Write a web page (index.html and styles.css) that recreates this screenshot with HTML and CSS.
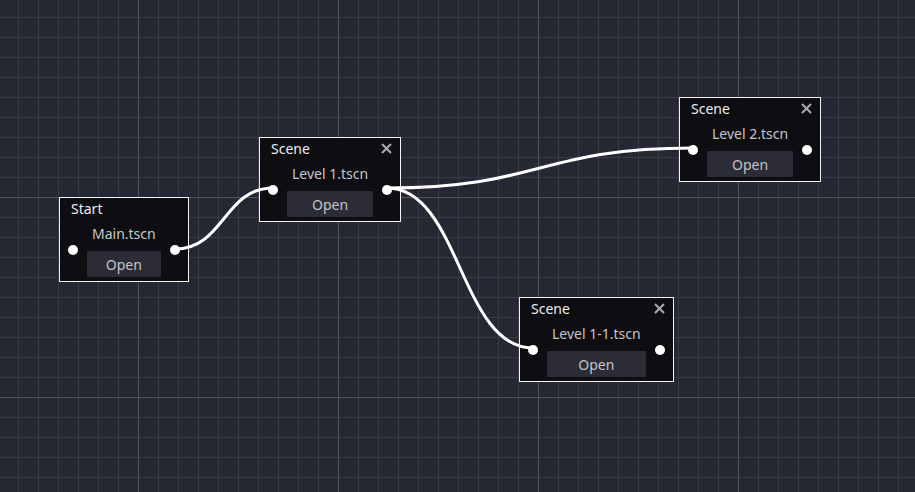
FILE: index.html
```html
<!DOCTYPE html>
<html lang="en">
<head>
  <meta charset="UTF-8" />
  <title>Scene graph</title>
  <link rel="stylesheet" href="styles.css">
</head>
<body>

<div class="graph">

  <div class="node node-main">
    <div class="node-title"><span>Start</span></div>
    <div class="node-body">
      <span class="port"></span>
      <div class="slot">
        <div class="file">Main.tscn</div>
        <button class="open">Open</button>
      </div>
      <span class="port"></span>
    </div>
  </div>

  <div class="node node-level1">
    <div class="node-title">
      <span>Scene</span>
      <svg class="close" width="11" height="11" viewBox="0 0 11 11"><path d="M1 1L10 10M10 1L1 10" /></svg>
    </div>
    <div class="node-body">
      <span class="port"></span>
      <div class="slot">
        <div class="file">Level 1.tscn</div>
        <button class="open">Open</button>
      </div>
      <span class="port"></span>
    </div>
  </div>

  <div class="node node-level2">
    <div class="node-title">
      <span>Scene</span>
      <svg class="close" width="11" height="11" viewBox="0 0 11 11"><path d="M1 1L10 10M10 1L1 10" /></svg>
    </div>
    <div class="node-body">
      <span class="port"></span>
      <div class="slot">
        <div class="file">Level 2.tscn</div>
        <button class="open">Open</button>
      </div>
      <span class="port"></span>
    </div>
  </div>

  <div class="node node-level11">
    <div class="node-title">
      <span>Scene</span>
      <svg class="close" width="11" height="11" viewBox="0 0 11 11"><path d="M1 1L10 10M10 1L1 10" /></svg>
    </div>
    <div class="node-body">
      <span class="port"></span>
      <div class="slot">
        <div class="file">Level 1-1.tscn</div>
        <button class="open">Open</button>
      </div>
      <span class="port"></span>
    </div>
  </div>

  <!-- connections sit above the node panels -->
  <svg class="wires" width="915" height="492">
    <path d="M175 249 C224 249 224 188 273 188" />
    <path d="M387 188 C540 188 540 148 693 148" />
    <path d="M387 188 C460 188 460 348 533 348" />
  </svg>

</div>

</body>
</html>
```

FILE: styles.css
```css
body {
  margin: 0;
  overflow: hidden;
  font-family: "Noto Sans", sans-serif;
  font-size: 14px;
}
.graph {
  position: relative;
  width: 915px;
  height: 492px;
  background-color: #252733;
  background-image:
    linear-gradient(to right, #51535f 1px, transparent 1px),
    linear-gradient(to bottom, #51535f 1px, transparent 1px),
    linear-gradient(to right, #393b48 1px, transparent 1px),
    linear-gradient(to bottom, #393b48 1px, transparent 1px);
  background-size: 200px 200px, 200px 200px, 20px 20px, 20px 20px;
  background-position: 138px 197px, 138px 197px, 18px 17px, 18px 17px;
}
.node {
  position: absolute;
  display: flex;
  flex-direction: column;
  background: #0e0e12;
  border: 1px solid #f2f2f2;
}
.node-main { left: 59px; top: 197px; }
.node-level1 { left: 259px; top: 137px; }
.node-level2 { left: 679px; top: 97px; }
.node-level11 { left: 519px; top: 297px; }
.node-title {
  height: 20px;
  display: flex;
  align-items: center;
  justify-content: space-between;
  padding: 0 8px 4px 11px;
  color: #ececec;
}
.close {
  stroke: #acacb0;
  stroke-width: 2;
  fill: none;
}
.node-body {
  display: flex;
  align-items: center;
  gap: 9px;
  padding: 0 8px 4px 8px;
}
.port {
  flex: none;
  width: 10px;
  height: 10px;
  border-radius: 50%;
  background: #fff;
}
.slot {
  display: flex;
  flex-direction: column;
}
.file {
  line-height: 22px;
  padding: 1px 5px 0;
  margin-bottom: 6px;
  text-align: center;
  color: #c6c6c9;
  white-space: nowrap;
}
.open {
  height: 26px;
  padding: 0;
  border: none;
  background: #2b2c35;
  color: #c4c4c8;
  font: inherit;
}
.wires {
  position: absolute;
  left: 0;
  top: 0;
  pointer-events: none;
}
.wires path {
  fill: none;
  stroke: #fff;
  stroke-width: 3;
  stroke-linecap: round;
}
```
